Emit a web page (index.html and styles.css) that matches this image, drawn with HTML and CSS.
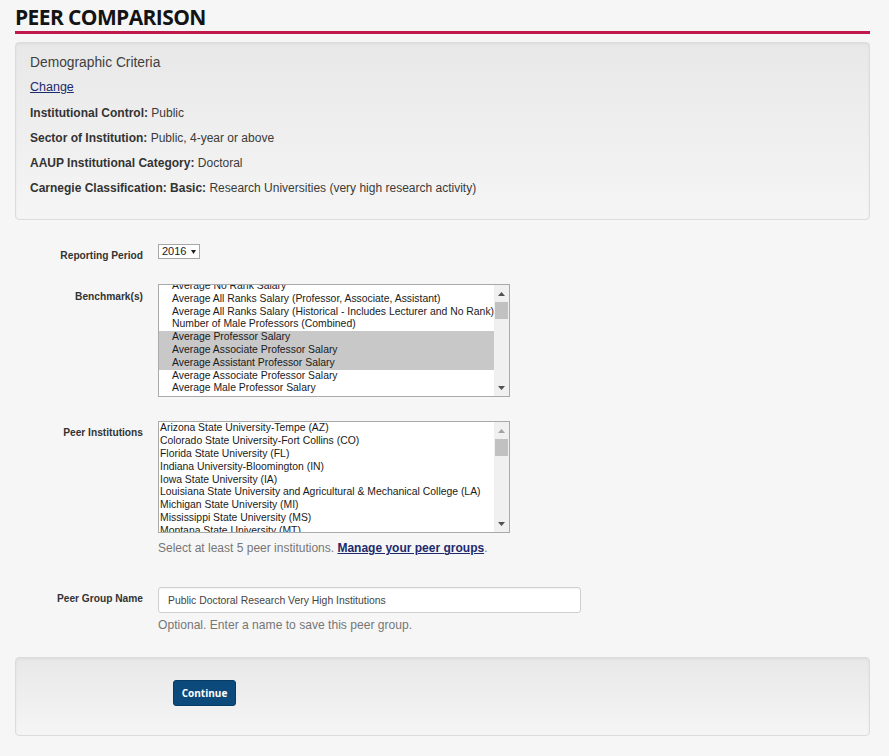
FILE: index.html
```html
<!DOCTYPE html>
<html lang="en">
<head>
<meta charset="utf-8">
<title>Peer Comparison</title>
<link rel="stylesheet" href="styles.css">
</head>
<body>
<div class="page">
  <h1 class="title">PEER COMPARISON</h1>

  <div class="well criteria">
    <h4 class="crit-head">Demographic Criteria</h4>
    <a class="change" href="#">Change</a>
    <p class="crit"><b>Institutional Control:</b> Public</p>
    <p class="crit"><b>Sector of Institution:</b> Public, 4-year or above</p>
    <p class="crit"><b>AAUP Institutional Category:</b> Doctoral</p>
    <p class="crit"><b>Carnegie Classification: Basic:</b> Research Universities (very high research activity)</p>
  </div>

  <form class="form">
    <div class="row row-period">
      <label class="lbl">Reporting Period</label>
      <div class="ctl">
        <span class="dropdown">2016 <svg class="caret" width="5" height="4" viewBox="0 0 5 4"><path d="M0 0H5L2.5 4Z" fill="#222"/></svg></span>
      </div>
    </div>

    <div class="row row-bench">
      <label class="lbl">Benchmark(s)</label>
      <div class="ctl">
        <div class="listbox bench">
          <div class="opts">
            <div class="opt-list bench-list">
              <div class="opt sub">Average No Rank Salary</div>
              <div class="opt sub">Average All Ranks Salary (Professor, Associate, Assistant)</div>
              <div class="opt sub">Average All Ranks Salary (Historical - Includes Lecturer and No Rank)</div>
              <div class="opt sub">Number of Male Professors (Combined)</div>
              <div class="opt sub sel">Average Professor Salary</div>
              <div class="opt sub sel">Average Associate Professor Salary</div>
              <div class="opt sub sel">Average Assistant Professor Salary</div>
              <div class="opt sub">Average Associate Professor Salary</div>
              <div class="opt sub">Average Male Professor Salary</div>
            </div>
          </div>
          <div class="sb">
            <div class="sb-btn"><svg width="7" height="4" viewBox="0 0 7 4"><path d="M0 4L3.5 0L7 4Z" fill="#505050"/></svg></div>
            <div class="sb-track"><div class="thumb"></div></div>
            <div class="sb-btn"><svg width="7" height="4" viewBox="0 0 7 4"><path d="M0 0H7L3.5 4Z" fill="#505050"/></svg></div>
          </div>
        </div>
      </div>
    </div>

    <div class="row row-peer">
      <label class="lbl">Peer Institutions</label>
      <div class="ctl">
        <div class="listbox peer">
          <div class="opts">
            <div class="opt-list peer-list">
              <div class="opt">Arizona State University-Tempe (AZ)</div>
              <div class="opt">Colorado State University-Fort Collins (CO)</div>
              <div class="opt">Florida State University (FL)</div>
              <div class="opt">Indiana University-Bloomington (IN)</div>
              <div class="opt">Iowa State University (IA)</div>
              <div class="opt">Louisiana State University and Agricultural &amp; Mechanical College (LA)</div>
              <div class="opt">Michigan State University (MI)</div>
              <div class="opt">Mississippi State University (MS)</div>
              <div class="opt">Montana State University (MT)</div>
            </div>
          </div>
          <div class="sb">
            <div class="sb-btn"><svg width="7" height="4" viewBox="0 0 7 4"><path d="M0 4L3.5 0L7 4Z" fill="#a3a3a3"/></svg></div>
            <div class="sb-track"><div class="thumb"></div></div>
            <div class="sb-btn"><svg width="7" height="4" viewBox="0 0 7 4"><path d="M0 0H7L3.5 4Z" fill="#505050"/></svg></div>
          </div>
        </div>
        <p class="help help-peer">Select at least 5 peer institutions. <a class="help-link" href="#">Manage your peer groups</a>.</p>
      </div>
    </div>

    <div class="row row-name">
      <label class="lbl">Peer Group Name</label>
      <div class="ctl">
        <input class="text-input" type="text" value="Public Doctoral Research Very High Institutions">
        <p class="help help-name">Optional. Enter a name to save this peer group.</p>
      </div>
    </div>
  </form>

  <div class="well actions">
    <button class="btn" type="button">Continue</button>
  </div>
</div>
</body>
</html>
```

FILE: styles.css
```css
* { box-sizing: border-box; }

html, body {
  margin: 0;
  padding: 0;
  background: #f6f6f6;
}

body {
  font-family: "Liberation Sans", Arial, sans-serif;
  color: #333;
}

.page {
  width: 855px;
  margin-left: 15px;
  padding-top: 4px;
}

.title {
  margin: 0;
  font-family: "Open Sans", sans-serif;
  font-weight: 700;
  font-size: 21px;
  line-height: 27px;
  color: #141414;
  border-bottom: 3px solid #c0184b;
  letter-spacing: -0.6px;
}

.well {
  border: 1px solid #dcdcdc;
  border-radius: 4px;
  background: linear-gradient(to bottom, #e8e8e8 0, #f5f5f5 100%);
  box-shadow: inset 0 1px 3px rgba(0,0,0,.05), 0 1px 0 rgba(255,255,255,.1);
}

.criteria {
  margin-top: 8px;
  width: 855px;
  padding: 10px 14px 21px;
}

.crit-head {
  margin: 0;
  font-weight: 400;
  font-size: 13.8px;
  line-height: 20px;
  color: #404040;
}

.change {
  display: block;
  margin-top: 4px;
  font-size: 12.5px;
  line-height: 20px;
  color: #1e2a6c;
  text-decoration: underline;
  width: max-content;
}

.crit {
  margin: 5.3px 0 0;
  font-size: 12px;
  line-height: 20px;
  color: #3a3a3a;
}

.crit:first-of-type { margin-top: 5.5px; }

.crit b { color: #333; }

.form {
  margin-top: 24px;
}

.row {
  display: flex;
  gap: 15px;
}

.lbl {
  width: 128px;
  flex: none;
  text-align: right;
  font-weight: 700;
  font-size: 10.2px;
  line-height: 14px;
  color: #333;
}

.ctl { flex: none; }

.row-period { height: 15px; }
.row-period .lbl { padding-top: 5px; }
.row-bench { margin-top: 25px; }
.row-bench .lbl { padding-top: 6px; }
.row-peer { margin-top: 24px; }
.row-peer .lbl { padding-top: 5px; }
.row-name { margin-top: 31px; }
.row-name .lbl { padding-top: 5px; }

.dropdown {
  display: flex;
  align-items: center;
  gap: 5px;
  width: 42px;
  height: 15px;
  padding-left: 3px;
  border: 1px solid #a6a6a6;
  background: #fff;
  font-size: 11px;
  line-height: 13px;
  color: #222;
}

.listbox {
  display: flex;
  width: 352px;
  border: 1px solid #a9a9a9;
  background: #fff;
}

.listbox.bench { height: 113px; }
.listbox.peer { height: 112px; }

.opts {
  flex: 1;
  overflow: hidden;
}

.opt-list { width: 100%; }

.bench-list { margin-top: -5.4px; }
.peer-list { margin-top: 0; }

.opt {
  font-size: 10.4px;
  line-height: 12.8px;
  height: 12.8px;
  white-space: nowrap;
  padding-left: 1px;
  color: #1a1a1a;
}

.opt.sub { padding-left: 13px; }
.opt.sel { background: #c8c8c8; }

.sb {
  width: 15px;
  flex: none;
  display: flex;
  flex-direction: column;
  background: #f0f0f0;
}

.sb-btn {
  height: 17px;
  flex: none;
  display: flex;
  align-items: center;
  justify-content: center;
}

.sb-btn svg { display: block; }

.sb-track { flex: 1; }

.thumb {
  width: 13px;
  height: 17px;
  margin-left: 1px;
  background: #c1c1c1;
}

.help {
  margin: 0;
  font-size: 12px;
  line-height: 16px;
  color: #767676;
}

.help-peer { margin-top: 7px; }
.help-name { margin-top: 4px; font-size: 12.1px; }

.help-link {
  font-weight: 700;
  color: #1e2a6c;
  text-decoration: underline;
}

.text-input {
  display: block;
  width: 423px;
  height: 26px;
  margin: 0;
  padding: 0 9px;
  border: 1px solid #cfcfcf;
  border-radius: 3px;
  background: #fff;
  box-shadow: inset 0 1px 1px rgba(0,0,0,.05);
  font-family: "Liberation Sans", Arial, sans-serif;
  font-size: 10.4px;
  color: #444;
  outline: none;
}

.actions {
  margin-top: 24px;
  width: 855px;
  height: 79px;
  padding: 22px 14px 0;
}

.btn {
  display: block;
  margin: 0 0 0 143px;
  width: 63px;
  height: 26px;
  padding: 0;
  border: 1px solid #073b63;
  border-radius: 3px;
  background: #0b4a7b;
  color: #fff;
  font-family: "Open Sans", sans-serif;
  font-weight: 700;
  font-size: 10px;
  line-height: 24px;
  cursor: pointer;
}
```
